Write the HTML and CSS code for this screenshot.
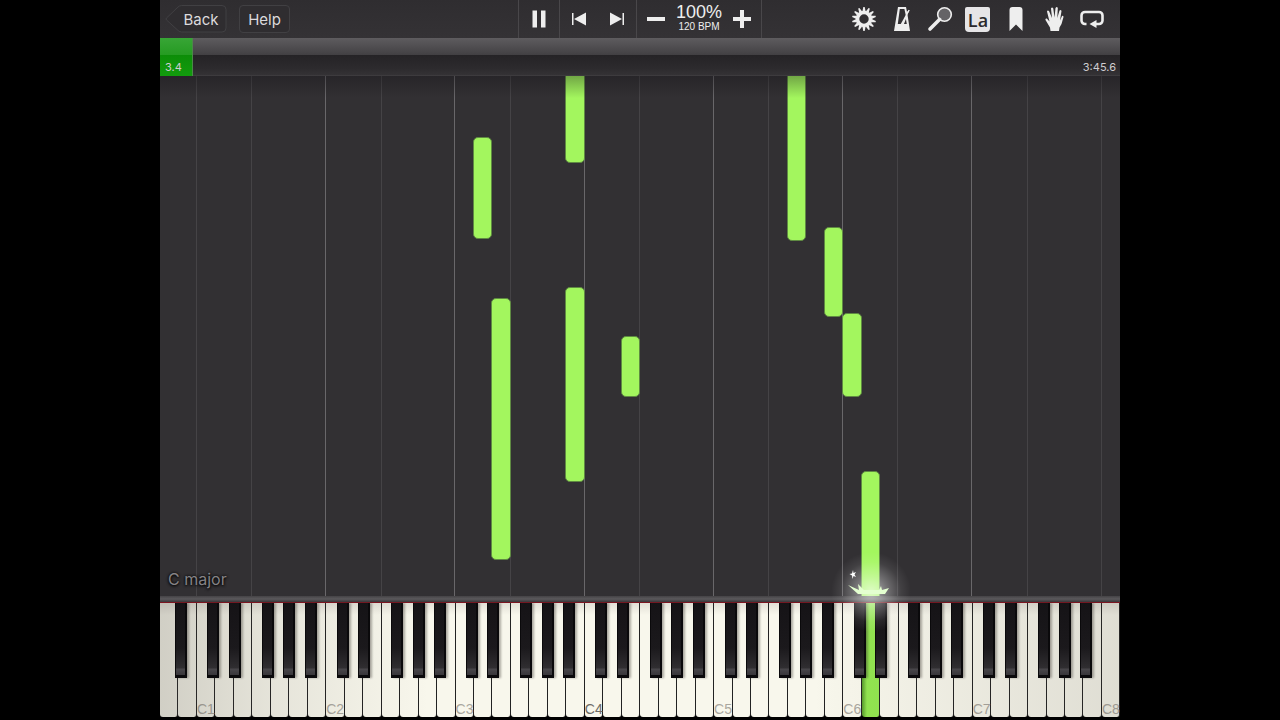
FILE: index.html
```html
<!DOCTYPE html>
<html lang="en">
<head>
<meta charset="UTF-8">
<title>Piano roll</title>
<link rel="stylesheet" href="styles.css">
</head>
<body>
<div class="player">

	<div class="toolbar">
		<div class="nav">
			<button class="back" type="button">
				<svg width="62" height="28" viewBox="0 0 62 28"><path d="M16.500 .5H57a4 4 0 0 1 4 4V23a4 4 0 0 1-4 4H16.500Q14 27 12 24.500L1.500 15Q.5 14 1.500 13L12 3Q14 .5 16.500 .5z"/></svg>
				<span>Back</span>
			</button>
			<button class="help" type="button">Help</button>
		</div>

		<div class="transport">
			<div class="group">
				<button type="button" aria-label="Pause"><svg width="20" height="20" viewBox="0 0 20 20"><path d="M3.500 1.500h4.500v17H3.500zM12 1.500h4.500v17H12z"/></svg></button>
			</div>
			<div class="group">
				<button type="button" aria-label="Previous"><svg width="20" height="20" viewBox="0 0 20 20"><path d="M3 4h1.500v12H3zM17 3.500v13L5 10z"/></svg></button>
				<button type="button" aria-label="Next"><svg width="20" height="20" viewBox="0 0 20 20"><path d="M15.500 4H17v12h-1.500zM3 3.500v13L15 10z"/></svg></button>
			</div>
			<div class="group">
				<button type="button" aria-label="Slower"><svg width="20" height="20" viewBox="0 0 20 20"><path d="M1 8h18v4H1z"/></svg></button>
				<div class="tempo"><b>100%</b><span>120 BPM</span></div>
				<button type="button" aria-label="Faster"><svg width="20" height="20" viewBox="0 0 20 20"><path d="M8 1h4v7h7v4h-7v7H8v-7H1V8h7z"/></svg></button>
			</div>
		</div>

		<div class="tools">
			<button type="button" aria-label="Settings"><svg id="gear" width="26" height="26" viewBox="-13 -13 26 26"><circle r="6.500" fill="none" stroke="#eee" stroke-width="3.600"/></svg></button>
			<button type="button" aria-label="Metronome"><svg width="26" height="26" viewBox="0 0 26 26"><path fill-rule="evenodd" d="M9 1h8l1 5 1.800-2.200.8.600-2.200 3.600L21 25H5zM10.800 3L8.800 18h4.500l3.600-8-1.500-7zM15 18h2.800l-.9-5z"/><path d="M11.500 18.500L19.500 4l1 .5-7 14z"/></svg></button>
			<button type="button" aria-label="Zoom"><svg width="26" height="26" viewBox="0 0 26 26"><circle cx="17.500" cy="8.500" r="6.800" fill="#656366" stroke="#eee" stroke-width="1.600"/><path d="M12.500 13.500L3 23" stroke="#eee" stroke-width="3.600" stroke-linecap="round"/></svg></button>
			<button type="button" class="names" aria-label="Note names"><span>La</span></button>
			<button type="button" aria-label="Bookmark"><svg width="26" height="26" viewBox="0 0 26 26"><path d="M9.500 1h7q3 0 3 3v21L13 18.500 6.500 25V4q0-3 3-3z"/></svg></button>
			<button type="button" aria-label="Hands"><svg width="26" height="26" viewBox="0 0 26 26"><path d="M9.500 25L9 21.500 7.500 19 4.500 14Q4 12 5.800 12.500L8.500 15.500 6 5.500Q6.500 3.800 8 5L11 12 10 2.500Q11 .5 12.300 2.500L13.500 11.500 14.500 2Q16 .2 16.800 2L16.300 12 18.500 4.500Q20 3.200 20.500 5L19 14.500 21 10Q22.300 9.200 22.500 11L20.500 18 18.500 21.500 18 25z"/></svg></button>
			<button type="button" aria-label="Loop"><svg width="26" height="26" viewBox="0 0 26 26"><path d="M7.500 18H6a3.500 3.500 0 0 1-3.500-3.500V9.500A3.500 3.500 0 0 1 6 6h14a3.500 3.500 0 0 1 3.500 3.500v5A3.500 3.500 0 0 1 20 18h-3" fill="none" stroke="#eee" stroke-width="2.600"/><path d="M10.500 18L17.500 14v8z"/></svg></button>
		</div>
	</div>

	<div class="timeline">
		<div class="played"></div>
		<span>3.4</span>
		<span>3:45.6</span>
	</div>

	<div class="roll" id="roll">
		<div class="signature">C major</div>
	</div>
	<div class="rail"></div>
	<div class="keyboard" id="keyboard"></div>

</div>
<script src="piano.js"></script>
</body>
</html>
```

FILE: styles.css
```css
* {

	box-sizing: border-box;
}
body {

	margin: 0;
	background: #000;
	color: #eee;
	font-family: Inter, "Liberation Sans", sans-serif;
	font-size: 15px;
}
button {

	margin: 0;
	padding: 0;
	border: 0;
	background: none;
	color: inherit;
	font: inherit;
}
svg {

	display: block;
	fill: #eee;
}
.player {

	display: flex;
	flex-direction: column;
	width: min(100vw, 133.33vh);
	height: 100vh;
	margin: 0 auto;
	overflow: hidden;
	background: #323033;
}

/* toolbar */
.toolbar {

	display: grid;
	grid-template-columns: 1fr auto 1fr;
	flex: none;
	height: 38px;
	background: linear-gradient(#2f2d30, #343235);
}
.nav {

	display: flex;
	align-items: center;
	gap: 12px;
	padding-left: 5px;
	color: #dcdadd;
}
.back {

	display: grid;
	height: 28px;
}
.back svg, .back span {

	grid-area: 1 / 1;
}
.back svg {

	fill: #2f2d30;
	stroke: #414043;
}
.back span {

	align-self: center;
	padding-left: 10px;
}
.help {

	width: 51px;
	height: 28px;
	border: 1px solid #414043;
	border-radius: 4px;
	background: #2f2d30;
}
.transport, .group, .tools {

	display: flex;
}
.group {

	border-left: 1px solid #49474a;
}
.group:last-child {

	border-right: 1px solid #49474a;
}
.group button, .tools button {

	display: flex;
	align-items: center;
	justify-content: center;
	width: 38px;
}
.group:first-child button {

	width: 40px;
}
.tempo {

	display: flex;
	flex-direction: column;
	align-items: center;
	width: 48px;
	padding-top: 4px;
	white-space: nowrap;
}
.tempo b {

	font-family: "Liberation Sans", sans-serif;
	font-size: 18px;
	font-weight: 400;
	line-height: 17px;
}
.tempo span {

	font-family: "Liberation Sans", sans-serif;
	font-size: 10px;
	line-height: 11px;
}
.tools {

	justify-content: flex-end;
	padding-right: 9px;
}
.names span {

	width: 25px;
	height: 25px;
	border-radius: 2px 2px 4px 4px;
	background: #e6e5e7;
	color: #2b292c;
	font: 600 18px/27px "Open Sans", sans-serif;
}

/* timeline */
.timeline {

	position: relative;
	display: flex;
	align-items: flex-end;
	justify-content: space-between;
	flex: none;
	height: 38px;
	padding: 0 4px 2px 5px;
	background: linear-gradient(#5e5c5f, #424043 17px, #252326 17px, #2c2a2d 30px, #343235 37px, #3d3b3e 37px);
	color: #cfcdd0;
	font-size: 11px;
	line-height: 14px;
}
.timeline span {

	position: relative;
}
.played {

	position: absolute;
	top: 0;
	bottom: 0;
	left: 0;
	width: 3.4%;
	border-right: 1px solid #4b8a48;
	background: linear-gradient(#38a536, #259b22 17px, #0c8d08 17px, #129c0d);
}

/* falling notes */
.roll {

	position: relative;
	flex: 1;
	overflow: hidden;
	background: #323033;
}
.roll:after {

	content: "";
	position: absolute;
	top: 0;
	left: 0;
	right: 0;
	height: 22px;
	background: linear-gradient(rgba(20, 18, 22, .35), rgba(20, 18, 22, 0));
}
.line {

	position: absolute;
	top: 0;
	bottom: 0;
	left: calc(var(--key) * 100% / 52 - 1px);
	width: 1px;
	background: #454346;
}
.line.octave {

	background: #69676a;
}
.note {

	position: absolute;
	top: calc(var(--top) * 100% / 520);
	left: calc(var(--key) * 100% / 52 - 1px);
	width: calc(100% / 52 + 1px);
	height: calc(var(--length) * 100% / 520);
	border: 1px solid #5f8a42;
	border-radius: 5px;
	background: #a3f65e;
}
.signature {

	position: absolute;
	z-index: 1;
	bottom: 6px;
	left: 8px;
	color: #858386;
	font-size: 16px;
	line-height: 22px;
	text-shadow: 0 0 3px #000, 0 1px 3px #000;
}
.rail {

	flex: none;
	height: 6px;
	background: linear-gradient(#454346, #5b595c 3px, #38363a);
}

/* keyboard */
.keyboard {

	position: relative;
	display: flex;
	flex: none;
	height: 118px;
	padding-bottom: 3px;
	border-top: 1px solid #7c1420;
	background: #000;
}
.keyboard:after {

	content: "";
	position: absolute;
	top: 0;
	bottom: 3px;
	left: 0;
	right: 0;
	background: linear-gradient(90deg, rgba(70, 65, 60, .22), rgba(70, 65, 60, .1) 12%, transparent 28%, transparent 68%, rgba(70, 65, 60, .14));
	pointer-events: none;
}
.key {

	position: relative;
	flex: 1 1 0;
	min-width: 0;
}
.white {

	display: flex;
	align-items: flex-end;
	width: 100%;
	height: 100%;
	border-right: 1px solid #222;
	border-radius: 0 0 3px 3px;
	background: linear-gradient(#e2dfd6, #f8f7ec 12px);
	color: #aaa79f;
	font-family: "Liberation Sans", sans-serif;
	font-size: 14px;
	line-height: 16px;
	white-space: nowrap;
}
.white.middle {

	color: #6d6b66;
}
.white.pressed {

	background: linear-gradient(90deg, #579b2c, #93e750 5px);
}
.black {

	position: absolute;
	z-index: 1;
	top: 0;
	left: calc(100% - 6px + var(--shift) * 1px);
	width: 12px;
	height: 75px;
	border: 1px solid #0a090b;
	border-width: 0 2px 3px 1px;
	background: linear-gradient(#151316, #1b191c 45px, #302e31 65px, #48464a 66px, #38363a);
	box-shadow: 2px 0 2px rgba(60, 55, 50, .4);
}

/* light where a note meets the keys */
.spark {

	position: absolute;
	z-index: 2;
	left: calc(var(--key) * 100% / 52 + 9px);
	bottom: 76px;
	width: 92px;
	height: 92px;
	margin-left: -46px;
	pointer-events: none;
}
```

FILE: piano.js
```javascript
var roll = document.getElementById('roll'),
	keyboard = document.getElementById('keyboard'),
	gear = document.getElementById('gear'),
	names = 'ABCDEFG',

	// offset of the black key that follows each white one
	shifts = {A: 3, C: -2, D: 1, F: -3, G: 0},

	// white key, top, length
	notes = [
		[17, 61, 102],
		[22, -10, 97],
		[34, -10, 175],
		[36, 151, 90],
		[37, 237, 84],
		[18, 222, 262],
		[22, 211, 195],
		[25, 260, 61],
		[38, 395, 135]
	],
	pressed = 38,
	i, name, key, html;

function place(className, index) {

	var el = document.createElement('div');

	el.className = className;
	el.style.setProperty('--key', index);
	return el;
}

for (i = 0; i < 52; i++) {

	name = names.charAt(i % 7);

	if (name == 'C' || name == 'F') {

		roll.appendChild(place(name == 'C' && i > 2 && i < 51 ? 'line octave' : 'line', i));
	}

	key = document.createElement('div');
	key.className = 'key';

	html = '<button type="button" class="white' + (i == 23 ? ' middle' : '') + (i == pressed ? ' pressed' : '') + '">';
	html += (name == 'C' ? 'C' + ((i - 2) / 7 + 1) : '') + '</button>';

	if (name in shifts && i < 51) {

		html += '<button type="button" class="black" style="--shift:' + shifts[name] + '"></button>';
	}

	key.innerHTML = html;
	keyboard.appendChild(key);
}

notes.forEach(function (n) {

	var el = place('note', n[0]);

	el.style.setProperty('--top', n[1]);
	el.style.setProperty('--length', n[2]);
	roll.appendChild(el);
});

// gear teeth
html = '';
for (i = 0; i < 14; i++) {

	html += '<path d="M-1.600 -7.500L-.7 -12H.7L1.600 -7.500z" transform="rotate(' + (i * 360 / 14) + ')"/>';
}
gear.innerHTML += html;

// glow and sparks over the pressed key
key = place('spark', pressed);
key.innerHTML = '<svg width="92" height="92" viewBox="-46 -46 92 92">' +
	'<defs><radialGradient id="glow"><stop offset="0" stop-color="#fff" stop-opacity=".65"/>' +
	'<stop offset=".4" stop-color="#fff" stop-opacity=".32"/><stop offset=".75" stop-color="#fff" stop-opacity=".08"/>' +
	'<stop offset="1" stop-color="#fff" stop-opacity="0"/></radialGradient></defs>' +
	'<circle cy="-6" r="40" fill="url(#glow)"/>' +
	'<path fill="#e4ffd0" d="M-23 -13L-12 -8-13 -14-7 -8H8L10 -12 11 -8 18 -10 14 -4H-13z"/>' +
	'<path fill="#fff" d="M-18 -28l.5 3 2.500-1-1.500 2.500 1.500 2.500-2.500-1-1 3-.5-3.500-2.500-1.500 2.500-.5z"/></svg>';
keyboard.appendChild(key);
```
